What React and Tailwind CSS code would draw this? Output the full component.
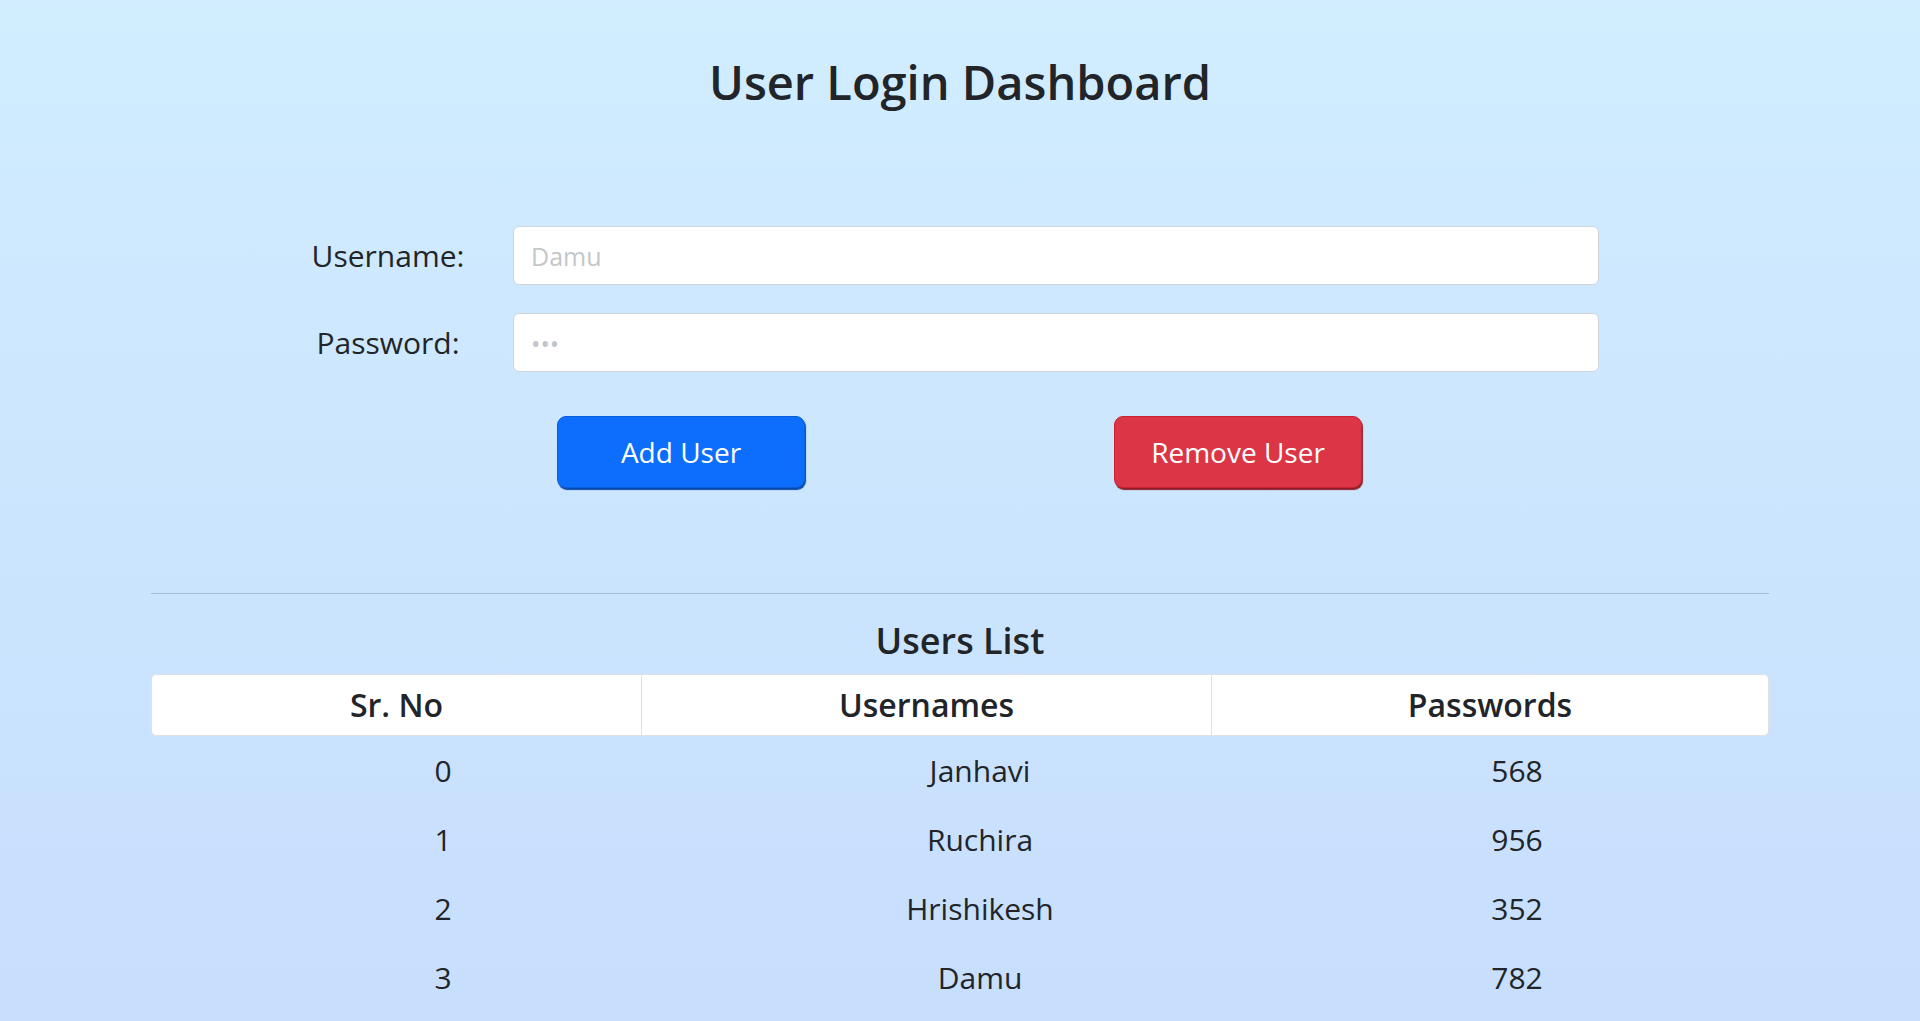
const users = [
  { id: 0, name: 'Janhavi', pass: '568' },
  { id: 1, name: 'Ruchira', pass: '956' },
  { id: 2, name: 'Hrishikesh', pass: '352' },
  { id: 3, name: 'Damu', pass: '782' },
]

export default function App() {
  return (
    <div
      className="min-h-screen bg-gradient-to-b from-[#d1edff] to-[#c7defd] text-[#212529]"
      style={{ fontFamily: '"Open Sans", "Noto Sans", sans-serif' }}
    >
      <h1 className="pt-[54px] text-center text-[47px] font-semibold leading-[56px]">
        User Login Dashboard
      </h1>

      {/* form */}
      <div className="mt-[116px] ml-[263px] w-[1336px] space-y-[28px]">
        <div className="flex items-center">
          <label className="w-[250px] text-center text-[30px]">Username:</label>
          <input
            className="h-[59px] w-[1086px] rounded-[6px] border border-[#ced4da] bg-white px-[17px] text-[25px] placeholder:text-[#c4c7ca] outline-none"
            placeholder="Damu"
          />
        </div>
        <div className="flex items-center">
          <label className="w-[250px] text-center text-[30px]">Password:</label>
          <input
            type="password"
            className="h-[59px] w-[1086px] rounded-[6px] border border-[#ced4da] bg-white px-[17px] text-[25px] placeholder:text-[#c4c7ca] outline-none"
            placeholder="•••"
          />
        </div>
      </div>

      <div className="mt-[44px] ml-[557px] flex gap-[309px]">
        <button className="h-[72px] w-[248px] rounded-[9px] border border-[#0b5ed7] bg-[#0d6efd] text-[28px] text-white shadow-[1px_2px_1px_#0849ad]">
          Add User
        </button>
        <button className="h-[72px] w-[248px] rounded-[9px] border border-[#c82333] bg-[#dc3545] text-[28px] text-white shadow-[1px_2px_1px_#8f1d29]">
          Remove User
        </button>
      </div>

      <div className="mx-[151px] mt-[105px]">
        <hr className="border-t border-[#a6bed3]" />
        <h3 className="mt-[26px] text-center text-[36px] font-semibold leading-[42px]">Users List</h3>

        <div className="mt-[12px] grid h-[62px] grid-cols-[489px_570px_1fr] overflow-hidden rounded-[5px] border border-[#dee2e6] bg-white text-[32px] font-semibold">
          <div className="flex items-center justify-center">Sr. No</div>
          <div className="flex items-center justify-center border-l border-[#dee2e6]">Usernames</div>
          <div className="flex items-center justify-center border-l border-[#dee2e6]">Passwords</div>
        </div>

        <div className="text-[30px]">
          {users.map((u) => (
            <div key={u.id} className="grid h-[69px] grid-cols-[584px_490px_1fr] items-center text-center">
              <div>{u.id}</div>
              <div>{u.name}</div>
              <div className="pl-[40px]">{u.pass}</div>
            </div>
          ))}
        </div>
      </div>
    </div>
  )
}
